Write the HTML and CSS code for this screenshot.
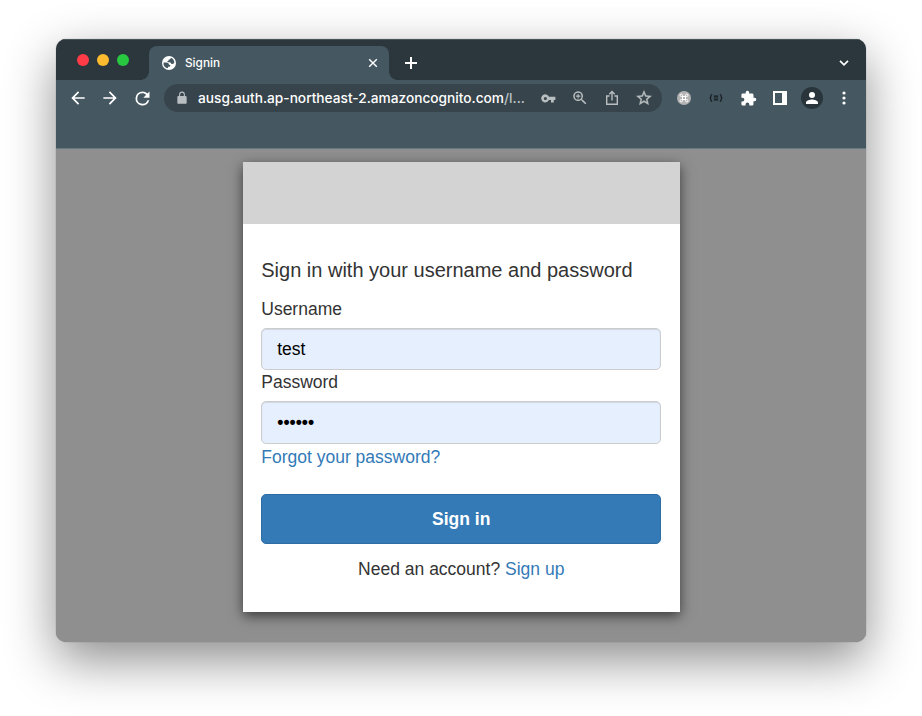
FILE: index.html
```html
<!DOCTYPE html>
<html lang="en">
<head>
<meta charset="utf-8">
<title>Signin</title>
<link rel="stylesheet" href="styles.css">
</head>
<body>
<div class="window">
  <header class="tabstrip">
    <div class="lights"><i class="red"></i><i class="yellow"></i><i class="green"></i></div>
    <div class="tab">
      <svg class="globe" viewBox="0 0 14 14"><circle cx="7" cy="7" r="7" fill="#fff"/><path fill="#455760" d="M8.800 1.700C8.900 2.900 8 3.400 6.800 3.500c-.1 1-.6 1.500-1.500 1.600.1.900.6 1.200 1.500 1.200 1.500 0 2.300.500 2.600 1.700 1.100.3 2-.2 2.900-1.100A5.500 5.500 0 0 0 8.800 1.700zM1.500 6.500h2.700c1.600 0 2.600.9 2.800 2.300.8 0 1.300.3 1.300.9 0 .9-1 1.100-2.100 1.100-.1.700-.3 1.200-.7 1.500A5.600 5.600 0 0 1 1.500 6.500z"/></svg>
      <span class="tab-title">Signin</span>
      <svg class="close" viewBox="0 0 10 10"><path d="M1.200 1.200l7.600 7.600M8.800 1.200L1.200 8.800"/></svg>
    </div>
    <svg class="plus" viewBox="0 0 12 12"><path d="M6 0v12M0 6h12"/></svg>
    <svg class="chevron" viewBox="0 0 10 6"><path d="M1 .8l4 4 4-4"/></svg>
  </header>
  <div class="toolbar">
    <span class="slot"><svg width="20" height="20" viewBox="0 0 24 24"><path d="M20 11H7.830l5.590-5.590L12 4l-8 8 8 8 1.410-1.410L7.830 13H20z"/></svg></span>
    <span class="slot"><svg width="20" height="20" viewBox="0 0 24 24"><path d="M12 4l-1.410 1.410L16.170 11H4v2h12.170l-5.580 5.590L12 20l8-8z"/></svg></span>
    <span class="slot"><svg width="21" height="21" viewBox="0 0 24 24"><path d="M17.650 6.350A7.960 7.960 0 0 0 12 4a8 8 0 1 0 7.730 10h-2.080A6 6 0 1 1 12 6c1.660 0 3.140.69 4.220 1.780L13 11h7V4z"/></svg></span>
    <div class="address">
      <svg class="lock" width="14" height="14" viewBox="0 0 24 24"><path d="M18 8.500h-1V6A5 5 0 0 0 7 6v2.500H6a2 2 0 0 0-2 2V20a2 2 0 0 0 2 2h12a2 2 0 0 0 2-2v-9.500a2 2 0 0 0-2-2zM8.900 8.500V6a3.100 3.100 0 0 1 6.200 0v2.500z"/></svg>
      <span class="url">ausg.auth.ap-northeast-2.amazoncognito.com<span class="path">/l...</span></span>
      <span class="slot"><svg width="15" height="15" viewBox="0 0 24 24"><path d="M12.650 9A6.500 6.500 0 1 0 12.650 14.500H16v4h4.500v-4H23V9zM7 14.500a2.500 2.500 0 1 1 0-5 2.500 2.500 0 0 1 0 5z"/></svg></span>
      <span class="slot"><svg width="18" height="18" viewBox="0 0 24 24"><path d="M15.500 14h-.79l-.28-.27a6.500 6.500 0 1 0-.7.7l.27.28v.79l5 4.990L20.490 19zm-6 0a4.500 4.500 0 1 1 0-9 4.500 4.500 0 0 1 0 9zM12.500 8.800h-2.300V6.500H8.800v2.300H6.500v1.400h2.300v2.300h1.400v-2.300h2.300z"/></svg></span>
      <span class="slot"><svg class="line" width="14" height="16" viewBox="0 0 14 16"><path d="M4.500 6H1.700v8.300h10.600V6H9.500M7 10.500V2M4.300 4.200L7 1.500l2.700 2.700"/></svg></span>
      <span class="slot"><svg width="18" height="18" viewBox="0 0 24 24"><path d="M22 9.240l-7.190-.62L12 2 9.190 8.630 2 9.240l5.460 4.730L5.820 21 12 17.270 18.180 21l-1.630-7.030zM12 15.400l-3.760 2.270 1-4.280-3.320-2.880 4.380-.38L12 6.100l1.710 4.040 4.380.38-3.320 2.880 1 4.280z" stroke="#b9bec1" stroke-width=".5"/></svg></span>
    </div>
    <span class="slot"><svg width="14" height="14" viewBox="0 0 14 14"><circle cx="7" cy="7" r="7" fill="#b3b3b3"/><path fill="none" stroke="#fff" stroke-width="1" d="M5.500 5.500h3v3h-3zM5.500 5.500H4.300A1.200 1.200 0 1 1 5.500 4.300zM8.500 5.500V4.300A1.200 1.200 0 1 1 9.700 5.500zM8.500 8.500h1.200A1.200 1.200 0 1 1 8.500 9.700zM5.500 8.500v1.200A1.200 1.200 0 1 1 4.300 8.500z"/></svg></span>
    <span class="slot"><svg class="braces" width="14" height="10" viewBox="0 0 14 10"><path d="M3.200 1.500c-1.300 0-1.300.4-1.300 1.700 0 1.200-.2 1.700-1.200 1.800 1 .1 1.200.6 1.200 1.800 0 1.300 0 1.700 1.300 1.700M10.800 1.500c1.300 0 1.300.4 1.300 1.700 0 1.200.2 1.700 1.200 1.800-1 .1-1.200.6-1.200 1.800 0 1.300 0 1.700-1.300 1.700M4.800 3.200h4.400M4.800 5h4.400M4.800 6.800h4.400"/></svg></span>
    <span class="slot"><svg width="17" height="17" viewBox="0 0 24 24"><path d="M20.500 11H19V7a2 2 0 0 0-2-2h-4V3.500a2.500 2.500 0 0 0-5 0V5H4a2 2 0 0 0-2 2v3.800h1.500a2.700 2.700 0 0 1 0 5.400H2V20a2 2 0 0 0 2 2h3.800v-1.500a2.700 2.700 0 0 1 5.400 0V22H17a2 2 0 0 0 2-2v-4h1.500a2.500 2.500 0 0 0 0-5z"/></svg></span>
    <span class="slot"><svg width="14" height="14" viewBox="0 0 14 14"><path fill-rule="evenodd" d="M0 0h14v14H0zM2 2v10h7V2z"/></svg></span>
    <span class="slot"><span class="avatar"><svg width="18" height="18" viewBox="0 0 24 24"><path d="M12 12a4 4 0 1 0 0-8 4 4 0 0 0 0 8zm0 2c-2.670 0-8 1.340-8 4v2h16v-2c0-2.660-5.330-4-8-4z"/></svg></span></span>
    <span class="slot"><svg width="4" height="14" viewBox="0 0 4 14"><circle cx="2" cy="2" r="1.600"/><circle cx="2" cy="7" r="1.600"/><circle cx="2" cy="12" r="1.600"/></svg></span>
  </div>
  <main class="page">
    <div class="card">
      <div class="banner"></div>
      <form class="form">
        <h1>Sign in with your username and password</h1>
        <label for="user">Username</label>
        <input id="user" type="text" value="test">
        <label for="pass">Password</label>
        <input id="pass" type="password" value="secret">
        <a class="forgot" href="#">Forgot your password?</a>
        <button type="button">Sign in</button>
        <p>Need an account? <a href="#">Sign up</a></p>
      </form>
    </div>
  </main>
</div>
</body>
</html>
```
FILE: styles.css
```css
* { box-sizing: border-box; }
body { margin: 0; height: 716px; padding: 39px 56px 0; background: #fff; overflow: hidden; font-family: "Liberation Sans", Arial, sans-serif; }
svg { display: block; flex: none; }
.window { width: 810px; height: 603px; display: flex; flex-direction: column; border-radius: 10px; overflow: hidden; background: #8f8f8f; box-shadow: 0 0 1px rgba(0,0,0,.5), 0 18px 50px rgba(0,0,0,.45); }
.tabstrip { height: 41px; flex: none; display: flex; align-items: flex-start; background: #2b373c; box-shadow: inset 0 1px #48545a; }
.lights { display: flex; gap: 8px; padding: 15px 0 0 21px; width: 93px; }
.lights i { width: 12px; height: 12px; border-radius: 50%; }
.red { background: #ff3b47; }
.yellow { background: #fdbc2f; }
.green { background: #28c840; }
.tab { position: relative; width: 240px; height: 34px; margin-top: 7px; padding: 0 11px 0 13px; display: flex; align-items: center; background: #455760; border-radius: 8px 8px 0 0; color: #fff; }
.tab::before, .tab::after { content: ""; position: absolute; bottom: 0; width: 8px; height: 8px; }
.tab::before { left: -8px; background: radial-gradient(circle at 0 0, transparent 7.5px, #455760 8px); }
.tab::after { right: -8px; background: radial-gradient(circle at 100% 0, transparent 7.5px, #455760 8px); }
.globe { width: 14px; height: 14px; margin-right: 9px; }
.tab-title { flex: 1; font: 500 11.800px/14px Inter, sans-serif; }
.close { width: 10px; height: 10px; fill: none; stroke: #fff; stroke-width: 1.400; }
.plus { width: 12px; height: 12px; margin: 18px 0 0 16px; stroke: #fff; stroke-width: 2; }
.chevron { width: 10px; height: 6px; margin: 21px 17px 0 auto; fill: none; stroke: #fff; stroke-width: 1.700; }
.toolbar { height: 69px; flex: none; display: flex; align-items: flex-start; padding: 4px 6px 0; background: #455760; border-bottom: 1px solid #667880; }
.slot { width: 32px; height: 28px; flex: none; display: flex; align-items: center; justify-content: center; fill: #fff; }
.address { width: 498px; height: 28px; margin: 0 6px; padding: 0 2px 0 11px; display: flex; align-items: center; border-radius: 14px; background: #37444b; }
.address svg { fill: #b9bec1; }
.address .line { fill: none; stroke: #b9bec1; stroke-width: 1.400; }
.lock { margin-right: 9px; }
.url { flex: 1; white-space: nowrap; color: #fff; font: 500 13.700px/16px Inter, sans-serif; padding-bottom: 1px; }
.path { color: #bcc2c5; }
.braces { fill: none; stroke: #151b1e; stroke-width: 1.200; }
.avatar { width: 22px; height: 22px; border-radius: 50%; background: #29353a; display: flex; align-items: center; justify-content: center; }
.page { flex: 1; padding-top: 13px; }
.card { width: 437.500px; height: 450px; margin-left: 186.500px; background: #fff; box-shadow: 0 4px 12px rgba(0,0,0,.6); }
.banner { height: 62px; background: #d3d3d3; }
.form { display: flex; flex-direction: column; padding: 32px 18.750px 0; color: #333; font-size: 17.500px; line-height: 25px; }
h1 { margin: 0 0 12.750px; font-size: 20px; font-weight: 400; line-height: 28px; }
label { margin-bottom: 5.750px; }
label + input + label { margin-bottom: 6.250px; }
input { width: 100%; height: 42.500px; padding: 1px 15px 0; border: 1px solid #ccc; border-radius: 5px; background: #e6effe; box-shadow: inset 0 1px 1px rgba(0,0,0,.1); color: #000; font: 17.500px "Liberation Sans", Arial, sans-serif; }
#pass { padding: 0 15px 1px; font-weight: bold; }
.forgot { padding-top: 1px; }
a { color: #337ab7; text-decoration: none; }
button { height: 50px; margin-top: 24px; padding: 2px 0 0; border: 1px solid #2e6da4; border-radius: 5px; background: #337ab7; color: #fff; font: bold 17.500px "Liberation Sans", Arial, sans-serif; }
p { margin: 13px 0 0; text-align: center; }
```
